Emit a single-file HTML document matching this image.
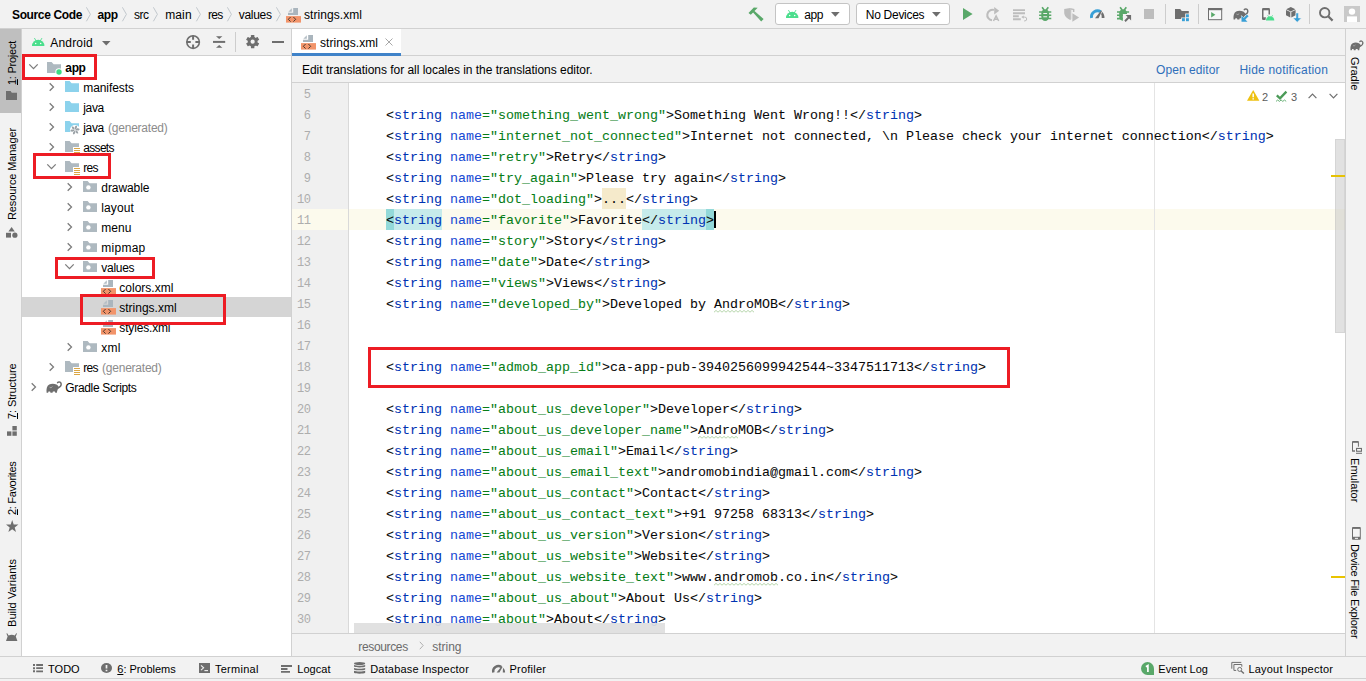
<!DOCTYPE html>
<html><head><meta charset="utf-8"><title>strings.xml</title>
<style>
html,body{margin:0;padding:0;}
body{width:1366px;height:681px;overflow:hidden;position:relative;background:#f2f2f2;font-family:"Liberation Sans",sans-serif;font-size:12px;color:#000;}
#r{position:absolute;left:0;top:0;width:1366px;height:681px;overflow:hidden;}
#r div,#r span,#r svg,#r pre{position:absolute;display:block;white-space:pre;}
#r span span,#r span u,#r span s,#r span b,#r span i{position:static;display:inline;}
.ul{text-decoration:underline;text-underline-offset:1px;text-decoration-thickness:1px}
#r svg{overflow:visible;}
.m{font-family:"Liberation Mono",monospace;}
.cl{font-family:"Liberation Mono",monospace;font-size:13.333px;line-height:21px;height:21px;left:386px;color:#080808;margin-top:1px;-webkit-text-stroke:0.05px;}
.cl b{font-weight:normal;color:#0033b3;}
.cl i{font-style:normal;color:#174ad4;}
.cl u{text-decoration:none;color:#067d17;}
.cl s{text-decoration:none;}
.ln{font-family:"Liberation Mono",monospace;font-size:12px;line-height:21px;height:21px;left:291px;width:19.5px;text-align:right;color:#adadad;letter-spacing:-0.5px;margin-top:2px}
</style></head><body><div id="r">
<div style="left:0px;top:28px;width:1366px;height:1px;background:#d1d1d1;"></div>
<div style="left:0px;top:29px;width:21px;height:84px;background:#bfbfbf;"></div>
<div style="left:21px;top:29px;width:1px;height:628px;background:#d1d1d1;"></div>
<div style="left:22px;top:29px;width:269px;height:26px;background:#f2f2f2;"></div>
<div style="left:22px;top:55px;width:269px;height:1px;background:#d1d1d1;"></div>
<div style="left:22px;top:56px;width:269px;height:601px;background:#fff;"></div>
<div style="left:22px;top:297px;width:269px;height:20px;background:#d5d5d5;"></div>
<div style="left:291px;top:29px;width:1px;height:628px;background:#d1d1d1;"></div>
<div style="left:292px;top:29px;width:1053px;height:26px;background:#f2f2f2;"></div>
<div style="left:292px;top:29px;width:109px;height:24px;background:#fff;"></div>
<div style="left:292px;top:53px;width:109px;height:3px;background:#4083c9;"></div>
<div style="left:401px;top:55px;width:944px;height:1px;background:#d1d1d1;"></div>
<div style="left:292px;top:56px;width:1053px;height:26px;background:#f2f2f2;"></div>
<div style="left:292px;top:82px;width:1053px;height:1px;background:#d1d1d1;"></div>
<div style="left:292px;top:83px;width:1053px;height:550px;background:#fff;"></div>
<div style="left:292px;top:83px;width:56px;height:550px;background:#f0f0f0;"></div>
<div style="left:348px;top:83px;width:1px;height:550px;background:#d9d9d9;"></div>
<div style="left:292px;top:209px;width:56px;height:21px;background:#fcfaed;"></div>
<div style="left:349px;top:209px;width:996px;height:21px;background:#fcfaed;"></div>
<div style="left:1154px;top:83px;width:1px;height:550px;background:#e4e4e4;"></div>
<div style="left:386px;top:209px;width:8px;height:21px;background:#93d9d9;"></div>
<div style="left:394px;top:209px;width:48px;height:21px;background:#c6ebeb;"></div>
<div style="left:642px;top:209px;width:64px;height:21px;background:#c6ebeb;"></div>
<div style="left:706px;top:209px;width:8px;height:21px;background:#93d9d9;"></div>
<div style="left:714px;top:211px;width:2px;height:17px;background:#000;"></div>
<div style="left:602px;top:188px;width:24px;height:21px;background:#f5eacb;"></div>
<div style="left:1335px;top:139px;width:10px;height:194px;background:rgba(195,195,195,0.5);box-shadow:inset 0 0 0 1px rgba(160,160,160,0.18);"></div>
<div style="left:1331px;top:175px;width:14px;height:2px;background:#e6c205;"></div>
<div style="left:1331px;top:576px;width:14px;height:2px;background:#e9c400;"></div>
<div style="left:292px;top:633px;width:1053px;height:1px;background:#d1d1d1;"></div>
<div style="left:292px;top:634px;width:1053px;height:22px;background:#f2f2f2;"></div>
<div style="left:1345px;top:29px;width:1px;height:628px;background:#d1d1d1;"></div>
<div style="left:0px;top:656px;width:1366px;height:1px;background:#d1d1d1;"></div>
<div style="left:0px;top:678px;width:1366px;height:1px;background:#d1d1d1;"></div>
<span style="left:12px;top:8.00px;font-size:12px;line-height:14.00px;font-weight:bold;letter-spacing:-0.365px;color:#000;">Source Code</span>
<span style="left:97.4px;top:8.00px;font-size:12px;line-height:14.00px;font-weight:bold;letter-spacing:-0.278px;color:#000;">app</span>
<span style="left:134px;top:8.00px;font-size:12px;line-height:14.00px;letter-spacing:-0.499px;color:#000;">src</span>
<span style="left:165.2px;top:8.00px;font-size:12px;line-height:14.00px;letter-spacing:0.122px;color:#000;">main</span>
<span style="left:208px;top:8.00px;font-size:12px;line-height:14.00px;letter-spacing:-0.723px;color:#000;">res</span>
<span style="left:238.7px;top:8.00px;font-size:12px;line-height:14.00px;letter-spacing:-0.281px;color:#000;">values</span>
<span style="left:304px;top:8.00px;font-size:12px;line-height:14.00px;letter-spacing:0.060px;color:#000;">strings.xml</span>
<svg style="left:86.1px;top:7px" width="4.8" height="14.6" viewBox="0 0 4.8 14.6"><path d="M0.4 0.3 L4.4 7.3 L0.4 14.3" fill="none" stroke="#bfc5ca" stroke-width="0.95"/></svg>
<svg style="left:121.89999999999999px;top:7px" width="4.8" height="14.6" viewBox="0 0 4.8 14.6"><path d="M0.4 0.3 L4.4 7.3 L0.4 14.3" fill="none" stroke="#bfc5ca" stroke-width="0.95"/></svg>
<svg style="left:152.6px;top:7px" width="4.8" height="14.6" viewBox="0 0 4.8 14.6"><path d="M0.4 0.3 L4.4 7.3 L0.4 14.3" fill="none" stroke="#bfc5ca" stroke-width="0.95"/></svg>
<svg style="left:195.6px;top:7px" width="4.8" height="14.6" viewBox="0 0 4.8 14.6"><path d="M0.4 0.3 L4.4 7.3 L0.4 14.3" fill="none" stroke="#bfc5ca" stroke-width="0.95"/></svg>
<svg style="left:227.1px;top:7px" width="4.8" height="14.6" viewBox="0 0 4.8 14.6"><path d="M0.4 0.3 L4.4 7.3 L0.4 14.3" fill="none" stroke="#bfc5ca" stroke-width="0.95"/></svg>
<svg style="left:275.6px;top:7px" width="4.8" height="14.6" viewBox="0 0 4.8 14.6"><path d="M0.4 0.3 L4.4 7.3 L0.4 14.3" fill="none" stroke="#bfc5ca" stroke-width="0.95"/></svg>
<div style="left:775px;top:3px;width:73px;height:20px;background:#fff;border:1px solid #c4c4c4;border-radius:3px"></div>
<div style="left:856px;top:3px;width:92px;height:20px;background:#fff;border:1px solid #c4c4c4;border-radius:3px"></div>
<span style="left:804.2px;top:8.00px;font-size:12px;line-height:14.00px;letter-spacing:-0.341px;color:#000;">app</span>
<span style="left:865.8px;top:8.00px;font-size:12px;line-height:14.00px;letter-spacing:-0.285px;color:#000;">No Devices</span>
<svg style="left:831.4px;top:12px" width="8.7" height="4.7" viewBox="0 0 8.7 4.7"><path d="M0 0 H8.7 L4.35 4.7 Z" fill="#6e6e6e"/></svg>
<svg style="left:931.6px;top:12px" width="8.7" height="4.7" viewBox="0 0 8.7 4.7"><path d="M0 0 H8.7 L4.35 4.7 Z" fill="#6e6e6e"/></svg>
<div style="left:1165px;top:4px;width:1px;height:20px;background:#cdcdcd;"></div>
<div style="left:1198px;top:4px;width:1px;height:20px;background:#cdcdcd;"></div>
<div style="left:1309px;top:4px;width:1px;height:20px;background:#cdcdcd;"></div>
<span style="left:50.3px;top:36.00px;font-size:12px;line-height:14.00px;letter-spacing:0.163px;color:#000;">Android</span>
<svg style="left:102px;top:41px" width="8.5" height="4.6" viewBox="0 0 8.5 4.6"><path d="M0 0 H8.5 L4.25 4.6 Z" fill="#6e6e6e"/></svg>
<div style="left:235px;top:32px;width:1px;height:20px;background:#cdcdcd;"></div>
<svg style="left:47px;top:62px" width="14" height="11" viewBox="0 0 14 11"><path d="M0 0 H4.6 L6.6 2.2 H14 V11 H0 Z" fill="#aeb9c0"/></svg>
<svg style="left:54.5px;top:67.5px" width="8" height="8" viewBox="0 0 8 8"><circle cx="4" cy="4" r="3.7" fill="#fff"/><circle cx="4" cy="4" r="2.7" fill="#3ddc84"/></svg>
<svg style="left:28.0px;top:63px" width="11" height="7" viewBox="0 0 11 7"><path d="M1.3 1.4 L5.5 5.6 L9.7 1.4" fill="none" stroke="#7c7c7c" stroke-width="1.3"/></svg>
<span style="left:65.3px;top:61.00px;font-size:12px;line-height:14.00px;font-weight:bold;letter-spacing:-0.345px;color:#000;">app</span>
<svg style="left:65px;top:81px" width="14" height="11" viewBox="0 0 14 11"><path d="M0 0 H4.6 L6.6 2.2 H14 V11 H0 Z" fill="#8cd2ec"/></svg>
<svg style="left:48.5px;top:82px" width="7" height="11" viewBox="0 0 7 11"><path d="M0.7 1.2 L4.5 5 L0.7 8.8" fill="none" stroke="#7c7c7c" stroke-width="1.3"/></svg>
<span style="left:83.3px;top:81.00px;font-size:12px;line-height:14.00px;letter-spacing:-0.095px;color:#000;">manifests</span>
<svg style="left:65px;top:101px" width="14" height="11" viewBox="0 0 14 11"><path d="M0 0 H4.6 L6.6 2.2 H14 V11 H0 Z" fill="#8cd2ec"/></svg>
<svg style="left:48.5px;top:102px" width="7" height="11" viewBox="0 0 7 11"><path d="M0.7 1.2 L4.5 5 L0.7 8.8" fill="none" stroke="#7c7c7c" stroke-width="1.3"/></svg>
<span style="left:83.3px;top:101.00px;font-size:12px;line-height:14.00px;letter-spacing:-0.378px;color:#000;">java</span>
<svg style="left:65px;top:121px" width="14" height="11" viewBox="0 0 14 11"><path d="M0 0 H4.6 L6.6 2.2 H14 V11 H0 Z" fill="#8cd2ec"/></svg>
<svg style="left:69.9px;top:124.7px" width="10" height="10" viewBox="0 0 10 10"><circle cx="5" cy="5" r="5" fill="#fff"/><g fill="#9aa1a6" transform="translate(5,5)"><path d="M0 -0.4 C1.6 -1.6 3 -3.2 1.4 -4.5 C0 -4 -0.9 -2.2 0 -0.4Z" transform="rotate(0)"/><path d="M0 -0.4 C1.6 -1.6 3 -3.2 1.4 -4.5 C0 -4 -0.9 -2.2 0 -0.4Z" transform="rotate(60)"/><path d="M0 -0.4 C1.6 -1.6 3 -3.2 1.4 -4.5 C0 -4 -0.9 -2.2 0 -0.4Z" transform="rotate(120)"/><path d="M0 -0.4 C1.6 -1.6 3 -3.2 1.4 -4.5 C0 -4 -0.9 -2.2 0 -0.4Z" transform="rotate(180)"/><path d="M0 -0.4 C1.6 -1.6 3 -3.2 1.4 -4.5 C0 -4 -0.9 -2.2 0 -0.4Z" transform="rotate(240)"/><path d="M0 -0.4 C1.6 -1.6 3 -3.2 1.4 -4.5 C0 -4 -0.9 -2.2 0 -0.4Z" transform="rotate(300)"/></g></svg>
<svg style="left:48.5px;top:122px" width="7" height="11" viewBox="0 0 7 11"><path d="M0.7 1.2 L4.5 5 L0.7 8.8" fill="none" stroke="#7c7c7c" stroke-width="1.3"/></svg>
<span style="left:83.3px;top:121.00px;font-size:12px;line-height:14.00px;letter-spacing:-0.378px;color:#000;">java</span>
<span style="left:108.0px;top:121.00px;font-size:12px;line-height:14.00px;letter-spacing:-0.222px;color:#8c8c8c;">(generated)</span>
<svg style="left:65px;top:141px" width="14" height="11" viewBox="0 0 14 11"><path d="M0 0 H4.6 L6.6 2.2 H14 V11 H0 Z" fill="#aeb9c0"/></svg>
<svg style="left:73px;top:147px" width="8" height="9" viewBox="0 0 8 9"><rect x="0" y="0" width="8" height="9" fill="#fff"/><path d="M1 1.5 H7 M1 3.5 H7 M1 5.5 H7 M1 7.5 H7" stroke="#dca744" stroke-width="1"/></svg>
<svg style="left:48.5px;top:142px" width="7" height="11" viewBox="0 0 7 11"><path d="M0.7 1.2 L4.5 5 L0.7 8.8" fill="none" stroke="#7c7c7c" stroke-width="1.3"/></svg>
<span style="left:83.3px;top:141.00px;font-size:12px;line-height:14.00px;letter-spacing:-0.697px;color:#000;">assets</span>
<svg style="left:65px;top:161px" width="14" height="11" viewBox="0 0 14 11"><path d="M0 0 H4.6 L6.6 2.2 H14 V11 H0 Z" fill="#aeb9c0"/></svg>
<svg style="left:73px;top:167px" width="8" height="9" viewBox="0 0 8 9"><rect x="0" y="0" width="8" height="9" fill="#fff"/><path d="M1 1.5 H7 M1 3.5 H7 M1 5.5 H7 M1 7.5 H7" stroke="#dca744" stroke-width="1"/></svg>
<svg style="left:46.0px;top:163px" width="11" height="7" viewBox="0 0 11 7"><path d="M1.3 1.4 L5.5 5.6 L9.7 1.4" fill="none" stroke="#7c7c7c" stroke-width="1.3"/></svg>
<span style="left:83.3px;top:161.00px;font-size:12px;line-height:14.00px;letter-spacing:-0.723px;color:#000;">res</span>
<svg style="left:83px;top:181px" width="14" height="11" viewBox="0 0 14 11"><path d="M0 0 H4.6 L6.6 2.2 H14 V11 H0 Z" fill="#aeb9c0"/></svg>
<svg style="left:86px;top:185.2px" width="5" height="5" viewBox="0 0 5 5"><circle cx="2.4" cy="2.4" r="2.2" fill="#fff"/></svg>
<svg style="left:66.5px;top:182px" width="7" height="11" viewBox="0 0 7 11"><path d="M0.7 1.2 L4.5 5 L0.7 8.8" fill="none" stroke="#7c7c7c" stroke-width="1.3"/></svg>
<span style="left:101.3px;top:181.00px;font-size:12px;line-height:14.00px;letter-spacing:-0.087px;color:#000;">drawable</span>
<svg style="left:83px;top:201px" width="14" height="11" viewBox="0 0 14 11"><path d="M0 0 H4.6 L6.6 2.2 H14 V11 H0 Z" fill="#aeb9c0"/></svg>
<svg style="left:86px;top:205.2px" width="5" height="5" viewBox="0 0 5 5"><circle cx="2.4" cy="2.4" r="2.2" fill="#fff"/></svg>
<svg style="left:66.5px;top:202px" width="7" height="11" viewBox="0 0 7 11"><path d="M0.7 1.2 L4.5 5 L0.7 8.8" fill="none" stroke="#7c7c7c" stroke-width="1.3"/></svg>
<span style="left:101.3px;top:201.00px;font-size:12px;line-height:14.00px;letter-spacing:0.113px;color:#000;">layout</span>
<svg style="left:83px;top:221px" width="14" height="11" viewBox="0 0 14 11"><path d="M0 0 H4.6 L6.6 2.2 H14 V11 H0 Z" fill="#aeb9c0"/></svg>
<svg style="left:86px;top:225.2px" width="5" height="5" viewBox="0 0 5 5"><circle cx="2.4" cy="2.4" r="2.2" fill="#fff"/></svg>
<svg style="left:66.5px;top:222px" width="7" height="11" viewBox="0 0 7 11"><path d="M0.7 1.2 L4.5 5 L0.7 8.8" fill="none" stroke="#7c7c7c" stroke-width="1.3"/></svg>
<span style="left:101.3px;top:221.00px;font-size:12px;line-height:14.00px;letter-spacing:-0.004px;color:#000;">menu</span>
<svg style="left:83px;top:241px" width="14" height="11" viewBox="0 0 14 11"><path d="M0 0 H4.6 L6.6 2.2 H14 V11 H0 Z" fill="#aeb9c0"/></svg>
<svg style="left:86px;top:245.2px" width="5" height="5" viewBox="0 0 5 5"><circle cx="2.4" cy="2.4" r="2.2" fill="#fff"/></svg>
<svg style="left:66.5px;top:242px" width="7" height="11" viewBox="0 0 7 11"><path d="M0.7 1.2 L4.5 5 L0.7 8.8" fill="none" stroke="#7c7c7c" stroke-width="1.3"/></svg>
<span style="left:101.3px;top:241.00px;font-size:12px;line-height:14.00px;letter-spacing:0.253px;color:#000;">mipmap</span>
<svg style="left:83px;top:261px" width="14" height="11" viewBox="0 0 14 11"><path d="M0 0 H4.6 L6.6 2.2 H14 V11 H0 Z" fill="#aeb9c0"/></svg>
<svg style="left:86px;top:265.2px" width="5" height="5" viewBox="0 0 5 5"><circle cx="2.4" cy="2.4" r="2.2" fill="#fff"/></svg>
<svg style="left:64.0px;top:263px" width="11" height="7" viewBox="0 0 11 7"><path d="M1.3 1.4 L5.5 5.6 L9.7 1.4" fill="none" stroke="#7c7c7c" stroke-width="1.3"/></svg>
<span style="left:101.3px;top:261.00px;font-size:12px;line-height:14.00px;letter-spacing:-0.281px;color:#000;">values</span>
<svg style="left:101px;top:279px" width="16" height="16" viewBox="0 0 16 16"><path d="M7.2 1 H12 V7.9 H2 V5.7 H7.2 Z" fill="#aab5bd"/><path d="M5.8 1.2 V4.7 H2.3 Z" fill="#b4bec5"/><rect x="0" y="9.1" width="15" height="6.5" fill="#f2946a"/><path d="M4.6 10 L2.3 12.3 L4.6 14.6 M7.4 10 L9.7 12.3 L7.4 14.6" fill="none" stroke="#4a3a30" stroke-width="1"/></svg>
<span style="left:119.3px;top:281.00px;font-size:12px;line-height:14.00px;letter-spacing:-0.001px;color:#000;">colors.xml</span>
<svg style="left:101px;top:299px" width="16" height="16" viewBox="0 0 16 16"><path d="M7.2 1 H12 V7.9 H2 V5.7 H7.2 Z" fill="#aab5bd"/><path d="M5.8 1.2 V4.7 H2.3 Z" fill="#b4bec5"/><rect x="0" y="9.1" width="15" height="6.5" fill="#f2946a"/><path d="M4.6 10 L2.3 12.3 L4.6 14.6 M7.4 10 L9.7 12.3 L7.4 14.6" fill="none" stroke="#4a3a30" stroke-width="1"/></svg>
<span style="left:119.3px;top:301.00px;font-size:12px;line-height:14.00px;letter-spacing:-0.004px;color:#000;">strings.xml</span>
<svg style="left:101px;top:319px" width="16" height="16" viewBox="0 0 16 16"><path d="M7.2 1 H12 V7.9 H2 V5.7 H7.2 Z" fill="#aab5bd"/><path d="M5.8 1.2 V4.7 H2.3 Z" fill="#b4bec5"/><rect x="0" y="9.1" width="15" height="6.5" fill="#f2946a"/><path d="M4.6 10 L2.3 12.3 L4.6 14.6 M7.4 10 L9.7 12.3 L7.4 14.6" fill="none" stroke="#4a3a30" stroke-width="1"/></svg>
<span style="left:119.3px;top:321.00px;font-size:12px;line-height:14.00px;letter-spacing:-0.167px;color:#000;">styles.xml</span>
<svg style="left:83px;top:341px" width="14" height="11" viewBox="0 0 14 11"><path d="M0 0 H4.6 L6.6 2.2 H14 V11 H0 Z" fill="#aeb9c0"/></svg>
<svg style="left:86px;top:345.2px" width="5" height="5" viewBox="0 0 5 5"><circle cx="2.4" cy="2.4" r="2.2" fill="#fff"/></svg>
<svg style="left:66.5px;top:342px" width="7" height="11" viewBox="0 0 7 11"><path d="M0.7 1.2 L4.5 5 L0.7 8.8" fill="none" stroke="#7c7c7c" stroke-width="1.3"/></svg>
<span style="left:101.3px;top:341.00px;font-size:12px;line-height:14.00px;letter-spacing:0.279px;color:#000;">xml</span>
<svg style="left:65px;top:361px" width="14" height="11" viewBox="0 0 14 11"><path d="M0 0 H4.6 L6.6 2.2 H14 V11 H0 Z" fill="#aeb9c0"/></svg>
<svg style="left:73px;top:367px" width="8" height="9" viewBox="0 0 8 9"><rect x="0" y="0" width="8" height="9" fill="#fff"/><path d="M1 1.5 H7 M1 3.5 H7 M1 5.5 H7 M1 7.5 H7" stroke="#dca744" stroke-width="1"/></svg>
<svg style="left:48.5px;top:362px" width="7" height="11" viewBox="0 0 7 11"><path d="M0.7 1.2 L4.5 5 L0.7 8.8" fill="none" stroke="#7c7c7c" stroke-width="1.3"/></svg>
<span style="left:83.3px;top:361.00px;font-size:12px;line-height:14.00px;letter-spacing:-0.723px;color:#000;">res</span>
<span style="left:102.0px;top:361.00px;font-size:12px;line-height:14.00px;letter-spacing:-0.222px;color:#8c8c8c;">(generated)</span>
<svg style="left:46.2px;top:380.6px" width="16" height="12" viewBox="0 0 16 12"><path fill="#6e6e6e" d="M0.6 11.8 C0.2 8 0.8 4.8 3.2 3.5 C5.4 2.4 8.2 2.5 10.4 3.5 C11.7 4.1 12.5 5.2 12.8 6.4 L11.7 8.4 C11.2 9.6 10.9 10.6 10.9 11.8 L9.3 11.8 L8.9 10.5 L6.9 10.5 L6.5 11.8 L4.5 11.8 L4.1 10.5 L2.5 10.5 L2.1 11.8 Z"/><path fill="none" stroke="#6e6e6e" stroke-width="1.5" stroke-linecap="round" d="M11.6 7.2 C14 6.2 15.5 4.4 15.1 2.7 C14.8 1.3 13.4 0.6 12.3 1.1 L11.6 1.6"/><path fill="none" stroke="#d8d8d8" stroke-width="0.6" d="M3.6 6.2 C4.6 7 5.6 6.6 6.4 5.6"/></svg>
<svg style="left:30.5px;top:382px" width="7" height="11" viewBox="0 0 7 11"><path d="M0.7 1.2 L4.5 5 L0.7 8.8" fill="none" stroke="#7c7c7c" stroke-width="1.3"/></svg>
<span style="left:65.3px;top:381.00px;font-size:12px;line-height:14.00px;letter-spacing:-0.345px;color:#000;">Gradle Scripts</span>
<div style="left:22px;top:54px;width:69px;height:20px;border:3px solid #ed1c24;"></div>
<div style="left:33px;top:153px;width:72px;height:20px;border:3px solid #ed1c24;"></div>
<div style="left:55px;top:257px;width:94px;height:16px;border:3px solid #ed1c24;"></div>
<div style="left:80px;top:294px;width:140px;height:25px;border:3px solid #ed1c24;"></div>
<div style="left:368px;top:347px;width:636px;height:35px;border:3px solid #ed1c24;"></div>
<span style="left:4.6px;top:85px;font-size:11px;line-height:14px;letter-spacing:-0.247px;color:#000;transform-origin:0 0;transform:rotate(-90deg);"><span class="ul">1</span>: Project</span>
<span style="left:4.6px;top:220px;font-size:11px;line-height:14px;letter-spacing:-0.097px;color:#000;transform-origin:0 0;transform:rotate(-90deg);">Resource Manager</span>
<span style="left:4.6px;top:419px;font-size:11px;line-height:14px;letter-spacing:-0.113px;color:#000;transform-origin:0 0;transform:rotate(-90deg);"><span class="ul">7</span>: Structure</span>
<span style="left:4.6px;top:515px;font-size:11px;line-height:14px;letter-spacing:-0.330px;color:#000;transform-origin:0 0;transform:rotate(-90deg);"><span class="ul">2</span>: Favorites</span>
<span style="left:4.6px;top:626.5px;font-size:11px;line-height:14px;letter-spacing:0.068px;color:#000;transform-origin:0 0;transform:rotate(-90deg);">Build Variants</span>
<span style="left:1362.1px;top:57px;font-size:11px;line-height:14px;letter-spacing:0.081px;color:#000;transform-origin:0 0;transform:rotate(90deg);">Gradle</span>
<span style="left:1362.1px;top:458px;font-size:11px;line-height:14px;letter-spacing:0.060px;color:#000;transform-origin:0 0;transform:rotate(90deg);">Emulator</span>
<span style="left:1362.1px;top:543.5px;font-size:11px;line-height:14px;letter-spacing:-0.196px;color:#000;transform-origin:0 0;transform:rotate(90deg);">Device File Explorer</span>
<span style="left:320px;top:36.00px;font-size:12px;line-height:14.00px;letter-spacing:0.060px;color:#000;">strings.xml</span>
<svg style="left:385px;top:38.3px" width="8" height="8" viewBox="0 0 8 8"><path d="M0.5 0.5 L7.5 7.5 M7.5 0.5 L0.5 7.5" stroke="#a8a8a8" stroke-width="1" fill="none"/></svg>
<span style="left:302px;top:63.00px;font-size:12px;line-height:14.00px;letter-spacing:-0.027px;color:#000;">Edit translations for all locales in the translations editor.</span>
<span style="left:1156px;top:63.00px;font-size:12px;line-height:14.00px;letter-spacing:0.072px;color:#2f6fba;">Open editor</span>
<span style="left:1239.5px;top:63.00px;font-size:12px;line-height:14.00px;letter-spacing:0.183px;color:#2f6fba;">Hide notification</span>
<span style="left:1262px;top:90.72px;font-size:11px;line-height:12.83px;letter-spacing:-0.518px;color:#5c5c5c;">2</span>
<span style="left:1291px;top:90.72px;font-size:11px;line-height:12.83px;letter-spacing:-0.518px;color:#5c5c5c;">3</span>
<span class="ln" style="top:83px">5</span>
<span class="ln" style="top:104px">6</span>
<span class="cl" style="top:104px">&lt;<b>string</b> <i>name</i><u>="something_went_wrong"</u>&gt;Something Went Wrong!!&lt;/<b>string</b>&gt;</span>
<span class="ln" style="top:125px">7</span>
<span class="cl" style="top:125px">&lt;<b>string</b> <i>name</i><u>="internet_not_connected"</u>&gt;Internet not connected, \n Please check your internet connection&lt;/<b>string</b>&gt;</span>
<span class="ln" style="top:146px">8</span>
<span class="cl" style="top:146px">&lt;<b>string</b> <i>name</i><u>="retry"</u>&gt;Retry&lt;/<b>string</b>&gt;</span>
<span class="ln" style="top:167px">9</span>
<span class="cl" style="top:167px">&lt;<b>string</b> <i>name</i><u>="try_again"</u>&gt;Please try again&lt;/<b>string</b>&gt;</span>
<span class="ln" style="top:188px">10</span>
<span class="cl" style="top:188px">&lt;<b>string</b> <i>name</i><u>="dot_loading"</u>&gt;...&lt;/<b>string</b>&gt;</span>
<span class="ln" style="top:209px">11</span>
<span class="cl" style="top:209px">&lt;<b>string</b> <i>name</i><u>="favorite"</u>&gt;Favorite&lt;/<b>string</b>&gt;</span>
<span class="ln" style="top:230px">12</span>
<span class="cl" style="top:230px">&lt;<b>string</b> <i>name</i><u>="story"</u>&gt;Story&lt;/<b>string</b>&gt;</span>
<span class="ln" style="top:251px">13</span>
<span class="cl" style="top:251px">&lt;<b>string</b> <i>name</i><u>="date"</u>&gt;Date&lt;/<b>string</b>&gt;</span>
<span class="ln" style="top:272px">14</span>
<span class="cl" style="top:272px">&lt;<b>string</b> <i>name</i><u>="views"</u>&gt;Views&lt;/<b>string</b>&gt;</span>
<span class="ln" style="top:293px">15</span>
<span class="cl" style="top:293px">&lt;<b>string</b> <i>name</i><u>="developed_by"</u>&gt;Developed by <s style="">Andro</s>MOB&lt;/<b>string</b>&gt;</span>
<span class="ln" style="top:314px">16</span>
<span class="ln" style="top:335px">17</span>
<span class="ln" style="top:356px">18</span>
<span class="cl" style="top:356px">&lt;<b>string</b> <i>name</i><u>="admob_app_id"</u>&gt;ca-app-pub-3940256099942544~3347511713&lt;/<b>string</b>&gt;</span>
<span class="ln" style="top:377px">19</span>
<span class="ln" style="top:398px">20</span>
<span class="cl" style="top:398px">&lt;<b>string</b> <i>name</i><u>="about_us_developer"</u>&gt;Developer&lt;/<b>string</b>&gt;</span>
<span class="ln" style="top:419px">21</span>
<span class="cl" style="top:419px">&lt;<b>string</b> <i>name</i><u>="about_us_developer_name"</u>&gt;<s style="">Andro</s>MOB&lt;/<b>string</b>&gt;</span>
<span class="ln" style="top:440px">22</span>
<span class="cl" style="top:440px">&lt;<b>string</b> <i>name</i><u>="about_us_email"</u>&gt;Email&lt;/<b>string</b>&gt;</span>
<span class="ln" style="top:461px">23</span>
<span class="cl" style="top:461px">&lt;<b>string</b> <i>name</i><u>="about_us_email_text"</u>&gt;andromobindia@gmail.com&lt;/<b>string</b>&gt;</span>
<span class="ln" style="top:482px">24</span>
<span class="cl" style="top:482px">&lt;<b>string</b> <i>name</i><u>="about_us_contact"</u>&gt;Contact&lt;/<b>string</b>&gt;</span>
<span class="ln" style="top:503px">25</span>
<span class="cl" style="top:503px">&lt;<b>string</b> <i>name</i><u>="about_us_contact_text"</u>&gt;+91 97258 68313&lt;/<b>string</b>&gt;</span>
<span class="ln" style="top:524px">26</span>
<span class="cl" style="top:524px">&lt;<b>string</b> <i>name</i><u>="about_us_version"</u>&gt;Version&lt;/<b>string</b>&gt;</span>
<span class="ln" style="top:545px">27</span>
<span class="cl" style="top:545px">&lt;<b>string</b> <i>name</i><u>="about_us_website"</u>&gt;Website&lt;/<b>string</b>&gt;</span>
<span class="ln" style="top:566px">28</span>
<span class="cl" style="top:566px">&lt;<b>string</b> <i>name</i><u>="about_us_website_text"</u>&gt;www.<s style="">andromob</s>.co.in&lt;/<b>string</b>&gt;</span>
<span class="ln" style="top:587px">29</span>
<span class="cl" style="top:587px">&lt;<b>string</b> <i>name</i><u>="about_us_about"</u>&gt;About Us&lt;/<b>string</b>&gt;</span>
<span class="ln" style="top:608px">30</span>
<span class="cl" style="top:608px">&lt;<b>string</b> <i>name</i><u>="about"</u>&gt;About&lt;/<b>string</b>&gt;</span>
<svg style="left:714px;top:309.6px" width="40" height="3" viewBox="0 0 40 3"><path d="M0.0 2.2 L2.0 0.4 L4.0 2.2 L6.0 0.4 L8.0 2.2 L10.0 0.4 L12.0 2.2 L14.0 0.4 L16.0 2.2 L18.0 0.4 L20.0 2.2 L22.0 0.4 L24.0 2.2 L26.0 0.4 L28.0 2.2 L30.0 0.4 L32.0 2.2 L34.0 0.4 L36.0 2.2 L38.0 0.4 L40.0 2.2" fill="none" stroke="#a5cc98" stroke-width="0.8"/></svg>
<svg style="left:698px;top:435.6px" width="40" height="3" viewBox="0 0 40 3"><path d="M0.0 2.2 L2.0 0.4 L4.0 2.2 L6.0 0.4 L8.0 2.2 L10.0 0.4 L12.0 2.2 L14.0 0.4 L16.0 2.2 L18.0 0.4 L20.0 2.2 L22.0 0.4 L24.0 2.2 L26.0 0.4 L28.0 2.2 L30.0 0.4 L32.0 2.2 L34.0 0.4 L36.0 2.2 L38.0 0.4 L40.0 2.2" fill="none" stroke="#a5cc98" stroke-width="0.8"/></svg>
<svg style="left:714px;top:582.6px" width="64" height="3" viewBox="0 0 64 3"><path d="M0.0 2.2 L2.0 0.4 L4.0 2.2 L6.0 0.4 L8.0 2.2 L10.0 0.4 L12.0 2.2 L14.0 0.4 L16.0 2.2 L18.0 0.4 L20.0 2.2 L22.0 0.4 L24.0 2.2 L26.0 0.4 L28.0 2.2 L30.0 0.4 L32.0 2.2 L34.0 0.4 L36.0 2.2 L38.0 0.4 L40.0 2.2 L42.0 0.4 L44.0 2.2 L46.0 0.4 L48.0 2.2 L50.0 0.4 L52.0 2.2 L54.0 0.4 L56.0 2.2 L58.0 0.4 L60.0 2.2 L62.0 0.4 L64.0 2.2" fill="none" stroke="#a5cc98" stroke-width="0.8"/></svg>
<div style="left:354px;top:623px;width:311px;height:10px;background:rgba(222,222,222,0.92);"></div>
<div style="left:292px;top:633px;width:1053px;height:1px;background:#d1d1d1;"></div>
<div style="left:292px;top:634px;width:1053px;height:22px;background:#f2f2f2;"></div>
<span style="left:358.3px;top:639.50px;font-size:12px;line-height:14.00px;letter-spacing:-0.354px;color:#6b6b6b;">resources</span>
<span style="left:432.3px;top:639.50px;font-size:12px;line-height:14.00px;letter-spacing:-0.024px;color:#6b6b6b;">string</span>
<svg style="left:419px;top:641px" width="5" height="9" viewBox="0 0 5 9"><path d="M0.8 0.8 L4.2 4.5 L0.8 8.2" fill="none" stroke="#b0b0b0" stroke-width="1"/></svg>
<span style="left:48px;top:663.12px;font-size:11px;line-height:12.83px;letter-spacing:0.031px;color:#000;">TODO</span>
<span style="left:117.3px;top:663.12px;font-size:11px;line-height:12.83px;letter-spacing:-0.035px;color:#000;"><span class="ul">6</span>: Problems</span>
<span style="left:214.9px;top:663.12px;font-size:11px;line-height:12.83px;letter-spacing:0.279px;color:#000;">Terminal</span>
<span style="left:297.3px;top:663.12px;font-size:11px;line-height:12.83px;letter-spacing:0.046px;color:#000;">Logcat</span>
<span style="left:370.2px;top:663.12px;font-size:11px;line-height:12.83px;letter-spacing:0.189px;color:#000;">Database Inspector</span>
<span style="left:509.5px;top:663.12px;font-size:11px;line-height:12.83px;letter-spacing:0.232px;color:#000;">Profiler</span>
<span style="left:1158.3px;top:663.12px;font-size:11px;line-height:12.83px;letter-spacing:0.007px;color:#000;">Event Log</span>
<span style="left:1248.4px;top:663.12px;font-size:11px;line-height:12.83px;letter-spacing:0.211px;color:#000;">Layout Inspector</span>
<svg style="left:33px;top:664px" width="10" height="9" viewBox="0 0 10 9"><path d="M0 1 H2 M0 4.2 H2 M0 7.3 H2" stroke="#6e6e6e" stroke-width="1.9"/><path d="M3.2 1 H10 M3.2 4.2 H10 M3.2 7.3 H10" stroke="#6e6e6e" stroke-width="1.8"/></svg>
<svg style="left:101.1px;top:662.7px" width="11" height="10" viewBox="0 0 11 10"><ellipse cx="5.5" cy="5" rx="5.5" ry="5" fill="#6e6e6e"/><path d="M5.5 2 V5.6 M5.5 6.8 V8.2" stroke="#f2f2f2" stroke-width="1.7"/></svg>
<svg style="left:199px;top:663.1px" width="11" height="10" viewBox="0 0 11 10"><rect width="11" height="10" fill="#6e6e6e"/><path d="M2 2.4 L4.6 4.8 L2 7.2" fill="none" stroke="#f2f2f2" stroke-width="1.1"/><path d="M5.4 7.6 H9" stroke="#f2f2f2" stroke-width="1.1"/></svg>
<svg style="left:281px;top:665.2px" width="11" height="8" viewBox="0 0 11 8"><path d="M0 1 H11 M0 4 H6.5 M0 6.9 H9" stroke="#6e6e6e" stroke-width="1.9"/></svg>
<svg style="left:353.8px;top:662.1px" width="11.2" height="12" viewBox="0 0 11.2 12"><g fill="#6e6e6e"><ellipse cx="5.6" cy="1.5" rx="5.6" ry="1.5"/><path d="M0 2.9 C1.5 3.9 9.7 3.9 11.2 2.9 V4.5 C9.7 5.7 1.5 5.7 0 4.5 Z"/><path d="M0 5.9 C1.5 6.9 9.7 6.9 11.2 5.9 V7.4 C9.7 8.6 1.5 8.6 0 7.4 Z"/><path d="M0 8.7 C1.5 9.7 9.7 9.7 11.2 8.7 V10.8 C9.7 12.0 1.5 12.0 0 10.8 Z"/></g></svg>
<svg style="left:491.9px;top:665.2px" width="13.2" height="7.6" viewBox="0 0 13.2 7.6"><path d="M1.3 7.5 A5.3 5.3 0 0 1 9.4 1.9" fill="none" stroke="#6e6e6e" stroke-width="2.4"/><path d="M4.6 7.6 L9.7 1.2 L10.6 1.9 L7.4 7.6 Z" fill="#6e6e6e"/><path d="M11 2.8 C12.4 4 13.1 5.6 13.1 7.4 H10.8 Z" fill="#6e6e6e"/></svg>
<svg style="left:1141px;top:662.1px" width="13" height="13" viewBox="0 0 13 13"><path d="M6.5 0 A6.5 6.5 0 1 0 6.5 13 H13 V6.5 A6.5 6.5 0 0 0 6.5 0 Z" fill="#59a869"/><path d="M4.9 4.7 L6.9 3.5 V10" fill="none" stroke="#fff" stroke-width="1.7"/></svg>
<svg style="left:1230.7px;top:662.1px" width="13" height="11.6" viewBox="0 0 13 11.6"><path d="M0.8 6.7 V0.4 H10.3" fill="none" stroke="#6e6e6e" stroke-width="1"/><path d="M5.2 8.4 H2.9 V2.5 H10.8 V4.7" fill="none" stroke="#6e6e6e" stroke-width="1"/><circle cx="8.7" cy="7.4" r="2" fill="none" stroke="#6e6e6e" stroke-width="1"/><path d="M10.2 8.9 L12.9 11.4" stroke="#6e6e6e" stroke-width="1.4"/></svg>
<svg style="left:747.5px;top:6.5px" width="16" height="15" viewBox="0 0 16 15"><path d="M0.5 6.1 L5.8 0.6 L9.7 0.8 L6.5 4 L15.6 11.9 L13.2 14.5 L5.1 5.6 L2.8 7.7 Z" fill="#59a869"/></svg>
<svg style="left:785.8px;top:10.1px" width="12.4" height="8" viewBox="0 0 12.4 8"><path d="M0 8 A6.2 6.2 0 0 1 12.4 8 Z" fill="#4bde8d" transform="translate(0,0)"/><path d="M2.6 0.4 L4.2 3 M9.8 0.4 L8.2 3" stroke="#4bde8d" stroke-width="0.9" stroke-linecap="round" fill="none"/><circle cx="3.7" cy="5.6" r="0.75" fill="#fff"/><circle cx="8.7" cy="5.6" r="0.75" fill="#fff"/></svg>
<svg style="left:963px;top:8px" width="10" height="12" viewBox="0 0 10 12"><path d="M0 0 L9.6 6 L0 12 Z" fill="#59a869"/></svg>
<svg style="left:986px;top:7px" width="14" height="14" viewBox="0 0 14 14"><path d="M7.9 2.9 A5.3 5.3 0 1 0 6 13.3" fill="none" stroke="#bdbdbd" stroke-width="2.1"/><path d="M8.2 0 L13.2 3.7 L8.2 7.5 Z" fill="#bdbdbd"/><path d="M7.5 14 L10.1 9 L12.7 14 M8.5 12.3 H11.7" fill="none" stroke="#bdbdbd" stroke-width="1.5"/></svg>
<svg style="left:1013px;top:8.8px" width="14" height="12" viewBox="0 0 14 12"><path d="M0 1.1 H12 M0 4.2 H12" stroke="#bdbdbd" stroke-width="1.9"/><path d="M0 7.2 H5.8 M0 10.2 H7.8" stroke="#bdbdbd" stroke-width="1.9"/><path d="M10 8.1 H11.8 A1.9 1.9 0 0 1 11.8 11.9 H11" fill="none" stroke="#bdbdbd" stroke-width="1"/><path d="M10.7 6.5 L8.3 8.1 L10.7 9.7Z" fill="#bdbdbd"/></svg>
<svg style="left:1038.9px;top:7px" width="12.4" height="14.4" viewBox="0 0 12.4 14.4"><path d="M3.1 0.3 L5.1 2.9 M9.3 0.3 L7.3 2.9" stroke="#59a869" stroke-width="1.7" fill="none"/><rect x="2.3" y="2.3" width="7.8" height="11.7" rx="3.9" ry="4.4" fill="#59a869"/><path d="M0.1 5 H12.3 M0.1 8.2 H12.3 M0.1 11.5 H12.3" stroke="#59a869" stroke-width="1.5"/><path d="M4.3 6.6 H8.1 M4.3 9.8 H8.1" stroke="#f2f2f2" stroke-width="1.05"/></svg>
<svg style="left:1063.8px;top:7.9px" width="15.2" height="13.9" viewBox="0 0 15.2 13.9"><path d="M0.2 0.9 L6.2 0 V12 C2.6 10.6 0.2 7.8 0.2 4.6 Z" fill="#bdbdbd"/><path d="M6.2 0 L10.4 0.9 V3.9 H8.9 V2.1 L7.3 1.8 V11.2 L6.2 12 Z" fill="#bdbdbd"/><path d="M8.4 5.2 L15.1 9.5 L8.4 13.85 Z" fill="#bdbdbd"/></svg>
<svg style="left:1089.7px;top:8.8px" width="14.6" height="9.4" viewBox="0 0 14.6 9.4"><path d="M1.5 9.1 A6.2 6.2 0 0 1 10.75 2.66" fill="none" stroke="#389fd6" stroke-width="2.8"/><path d="M5 9.2 L11.1 1.4 L12 2.1 L8.6 9.2 Z" fill="#6e6e6e"/><path d="M12.3 2.9 C13.8 4.4 14.6 6.6 14.5 9.1 H11.7 C11.8 7.4 11.6 6 11.1 5 Z" fill="#6e6e6e"/></svg>
<svg style="left:1117px;top:7px" width="14.5" height="15" viewBox="0 0 14.5 15"><path d="M3.1 0.3 L5.1 2.9 M9.3 0.3 L7.3 2.9" stroke="#59a869" stroke-width="1.7" fill="none"/><path d="M2.2 6.1 C2.2 1 10 1 10 6.1 V7 H5.8 V13.9 C3.6 13.5 2.2 12 2.2 9.8 Z" fill="#59a869"/><path d="M0 5 H12.1 M0 8.3 H5.8 M0 11.6 H5.8" stroke="#59a869" stroke-width="1.6"/><path d="M8.6 8 H14.1 V13.5 L12.1 11.5 L8.7 14.9 L7.3 13.5 L10.7 10.1 Z" fill="#6e6e6e" stroke="#f2f2f2" stroke-width="0.5" paint-order="stroke"/></svg>
<div style="left:1144px;top:9px;width:10px;height:10px;background:#bdbdbd;"></div>
<svg style="left:1175.1px;top:8.8px" width="14.2" height="12.4" viewBox="0 0 14.2 12.4"><path d="M0 0 H5.2 L6.8 2 H13.8 V4.6 H10.2 V8.6 H6.2 V10.1 H0 Z" fill="#6e6e6e"/><rect x="11" y="5.3" width="2.9" height="3" fill="#389fd6"/><rect x="7" y="9.2" width="2.9" height="3" fill="#389fd6"/><rect x="11" y="9.2" width="2.9" height="3" fill="#389fd6"/></svg>
<svg style="left:1208px;top:7.9px" width="14.2" height="12.2" viewBox="0 0 14.2 12.2"><rect x="0.5" y="0.5" width="13.2" height="11.2" fill="#f7f7f7" stroke="#6e6e6e" stroke-width="1"/><rect x="0" y="0" width="14.2" height="2.2" fill="#6e6e6e"/><path d="M3.2 4 L7.4 6.7 L3.2 9.4Z" fill="#59a869"/></svg>
<svg style="left:1233.4px;top:7.6px" width="15.6" height="11.8" viewBox="0 0 16 12"><path fill="#6e6e6e" d="M0.6 11.8 C0.2 8 0.8 4.8 3.2 3.5 C5.4 2.4 8.2 2.5 10.4 3.5 C11.7 4.1 12.5 5.2 12.8 6.4 L11.7 8.4 C11.2 9.6 10.9 10.6 10.9 11.8 L9.3 11.8 L8.9 10.5 L6.9 10.5 L6.5 11.8 L4.5 11.8 L4.1 10.5 L2.5 10.5 L2.1 11.8 Z"/><path fill="none" stroke="#6e6e6e" stroke-width="1.5" stroke-linecap="round" d="M11.6 7.2 C14 6.2 15.5 4.4 15.1 2.7 C14.8 1.3 13.4 0.6 12.3 1.1 L11.6 1.6"/><path fill="none" stroke="#d8d8d8" stroke-width="0.6" d="M3.6 6.2 C4.6 7 5.6 6.6 6.4 5.6"/></svg>
<svg style="left:1241.4px;top:14.4px" width="8.4" height="8.4" viewBox="0 0 8.4 8.4"><path d="M0.5 1.7 L0.5 7.7 L6.5 7.7 L4.3 5.5 L7.6 2.2 L6 0.6 L2.7 3.9 Z" fill="#389fd6" stroke="#f2f2f2" stroke-width="0.9" paint-order="stroke"/></svg>
<svg style="left:1262px;top:8px" width="12.6" height="13" viewBox="0 0 12.6 13"><rect x="0" y="0" width="8" height="12.1" rx="1.3" fill="#6e6e6e"/><rect x="1.5" y="2.3" width="5" height="7" fill="#f6f6f6"/><path d="M3.2 13 L4.6 6.4 H12.6 V13 Z" fill="#f2f2f2"/></svg>
<svg style="left:1266px;top:15.3px" width="8.3" height="5.6" viewBox="0 0 12.4 8"><path d="M0 8 A6.2 6.2 0 0 1 12.4 8 Z" fill="#4bde8d" transform="translate(0,0)"/><path d="M2.6 0.4 L4.2 3 M9.8 0.4 L8.2 3" stroke="#4bde8d" stroke-width="0.9" stroke-linecap="round" fill="none"/><circle cx="3.7" cy="5.6" r="0.75" fill="#3ddc84"/><circle cx="8.7" cy="5.6" r="0.75" fill="#3ddc84"/></svg>
<svg style="left:1285.6px;top:7px" width="16" height="15.4" viewBox="0 0 16 15.4"><path d="M4.8 0 L9.4 2.2 L4.8 4.4 L0.2 2.2 Z M0 3 L4.3 5.1 V10.4 L0 8.2 Z M9.6 3 V8.2 L5.3 10.4 V5.1 Z" fill="#6e6e6e"/><path d="M10 6 H12.4 V11 H15.4 L11.2 15.2 L7 11 H10 Z" fill="#389fd6" stroke="#f2f2f2" stroke-width="0.5"/></svg>
<svg style="left:1318px;top:6px" width="16" height="16" viewBox="0 0 16 16"><circle cx="6.7" cy="6.7" r="4.7" fill="none" stroke="#6e6e6e" stroke-width="1.9"/><path d="M10.2 10.2 L14.6 14.6" stroke="#6e6e6e" stroke-width="2.2"/></svg>
<svg style="left:1344px;top:6px" width="16" height="16" viewBox="0 0 16 16"><rect width="16" height="16" fill="#c9c9c9"/><circle cx="8" cy="5.6" r="3.2" fill="#fff"/><rect x="3" y="10.4" width="10" height="5.6" fill="#fff"/></svg>
<svg style="left:31.7px;top:38.2px" width="12.4" height="8" viewBox="0 0 12.4 8"><path d="M0 8 A6.2 6.2 0 0 1 12.4 8 Z" fill="#4bde8d" transform="translate(0,0)"/><path d="M2.6 0.4 L4.2 3 M9.8 0.4 L8.2 3" stroke="#4bde8d" stroke-width="0.9" stroke-linecap="round" fill="none"/><circle cx="3.7" cy="5.6" r="0.75" fill="#fff"/><circle cx="8.7" cy="5.6" r="0.75" fill="#fff"/></svg>
<svg style="left:185.9px;top:34.9px" width="14.2" height="14.2" viewBox="0 0 14.2 14.2"><circle cx="7.1" cy="7.1" r="6.3" fill="none" stroke="#6e6e6e" stroke-width="1.6"/><path d="M7.1 0.6 V4.8 M7.1 9.4 V13.6 M0.6 7.1 H4.8 M9.4 7.1 H13.6" stroke="#6e6e6e" stroke-width="2"/></svg>
<svg style="left:212.8px;top:36px" width="12.2" height="12" viewBox="0 0 12.2 12"><path d="M0 5.9 H12.2" stroke="#6e6e6e" stroke-width="2"/><path d="M3 0.2 H9.4 L6.2 2.9 Z M3 11.8 H9.4 L6.2 9.1 Z" fill="#6e6e6e"/></svg>
<svg style="left:245.5px;top:35.4px" width="13.3" height="13.3" viewBox="0 0 13.3 13.3"><g transform="translate(6.65,6.65)" fill="#6e6e6e"><rect x="-1.7" y="-6.65" width="3.4" height="13.3" rx="0.4" transform="rotate(0)"/><rect x="-1.7" y="-6.65" width="3.4" height="13.3" rx="0.4" transform="rotate(60)"/><rect x="-1.7" y="-6.65" width="3.4" height="13.3" rx="0.4" transform="rotate(120)"/><circle r="4.921"/></g><circle cx="6.65" cy="6.65" r="2.1" fill="#f2f2f2"/></svg>
<div style="left:272px;top:40.9px;width:12px;height:2px;background:#6e6e6e;"></div>
<svg style="left:6px;top:91px" width="11" height="9" viewBox="0 0 11 9"><path d="M0 0 H4.6 L5.8 1.8 H11 V9 H0 Z" fill="#6e6e6e"/></svg>
<svg style="left:5.7px;top:226.5px" width="11.6" height="10.6" viewBox="0 0 11.6 10.6"><path d="M5.6 0 L8.8 4.6 H2.4 Z" fill="#6e6e6e"/><rect x="0" y="5.8" width="5" height="4.8" fill="#6e6e6e"/><circle cx="8.9" cy="8.2" r="2.6" fill="#6e6e6e"/></svg>
<svg style="left:6.6px;top:425.6px" width="9.8" height="9.8" viewBox="0 0 9.8 9.8"><rect x="5.4" y="0" width="4.4" height="4.4" fill="#6e6e6e"/><rect x="0" y="5.4" width="4.4" height="4.4" fill="#6e6e6e"/><rect x="5.4" y="5.4" width="4.4" height="4.4" fill="#6e6e6e"/></svg>
<svg style="left:5.6px;top:520px" width="12.4" height="12" viewBox="0 0 12.4 12"><path d="M6.2 0 L7.7 4.4 L12.4 4.5 L8.7 7.4 L10 11.9 L6.2 9.2 L2.4 11.9 L3.7 7.4 L0 4.5 L4.7 4.4 Z" fill="#6e6e6e"/></svg>
<svg style="left:5.9px;top:633px" width="11.4" height="8" viewBox="0 0 11.4 8"><path d="M0 8 L1.6 3.4 L0.4 0.6 L1.2 0.2 L2.6 2.6 C4.6 1.6 6.8 1.6 8.8 2.6 L10.2 0.2 L11 0.6 L9.8 3.4 L11.4 8 Z" fill="#6e6e6e"/></svg>
<svg style="left:1349.8px;top:39.6px" width="13.6" height="10.6" viewBox="0 0 16 12"><path fill="#6e6e6e" d="M0.6 11.8 C0.2 8 0.8 4.8 3.2 3.5 C5.4 2.4 8.2 2.5 10.4 3.5 C11.7 4.1 12.5 5.2 12.8 6.4 L11.7 8.4 C11.2 9.6 10.9 10.6 10.9 11.8 L9.3 11.8 L8.9 10.5 L6.9 10.5 L6.5 11.8 L4.5 11.8 L4.1 10.5 L2.5 10.5 L2.1 11.8 Z"/><path fill="none" stroke="#6e6e6e" stroke-width="1.5" stroke-linecap="round" d="M11.6 7.2 C14 6.2 15.5 4.4 15.1 2.7 C14.8 1.3 13.4 0.6 12.3 1.1 L11.6 1.6"/><path fill="none" stroke="#d8d8d8" stroke-width="0.6" d="M3.6 6.2 C4.6 7 5.6 6.6 6.4 5.6"/></svg>
<svg style="left:1352px;top:441.1px" width="10.5" height="13" viewBox="0 0 10.5 13"><rect x="0" y="0" width="6.9" height="10.8" rx="0.9" fill="#6e6e6e"/><rect x="1" y="1.8" width="4.9" height="7.5" fill="#f4f4f4"/><rect x="3" y="5.7" width="7.5" height="7.3" fill="#f2f2f2"/><rect x="4.55" y="7.45" width="4.9" height="2.8" fill="#f7f7f7" stroke="#6e6e6e" stroke-width="1.1"/><path d="M4 12.3 H10" stroke="#6e6e6e" stroke-width="1"/></svg>
<svg style="left:1352px;top:527.1px" width="8.8" height="12.7" viewBox="0 0 8.8 12.7"><rect x="0" y="0" width="8.8" height="12.7" rx="0.9" fill="#6e6e6e"/><rect x="1" y="1.9" width="6.8" height="7.9" fill="#f4f4f4"/><rect x="2.9" y="10.8" width="3.1" height="1.1" fill="#f2f2f2"/></svg>
<svg style="left:1246.8px;top:90.4px" width="12.4" height="10.8" viewBox="0 0 12.4 10.8"><path d="M6.2 0 L12.4 10.8 H0 Z" fill="#eec111"/><path d="M6.2 3.6 V7.2 M6.2 8.2 V9.6" stroke="#fff" stroke-width="1.5"/></svg>
<svg style="left:1276px;top:91px" width="12" height="12" viewBox="0 0 12 12"><path d="M0.8 4.4 L4 7.4 L10.4 0.6" fill="none" stroke="#4c9b58" stroke-width="2.3"/><path d="M0 10.4 L1.7 9 L3.4 10.4 L5.1 9 L6.8 10.4 L8.5 9 L10.2 10.4" fill="none" stroke="#59a869" stroke-width="0.9"/></svg>
<svg style="left:1308px;top:93px" width="9" height="6" viewBox="0 0 9 6"><path d="M0.6 5.2 L4.5 1.2 L8.4 5.2" fill="none" stroke="#6e6e6e" stroke-width="1.2"/></svg>
<svg style="left:1329px;top:93px" width="9" height="6" viewBox="0 0 9 6"><path d="M0.6 0.8 L4.5 4.8 L8.4 0.8" fill="none" stroke="#6e6e6e" stroke-width="1.2"/></svg>
<svg style="left:301px;top:34px" width="16" height="16" viewBox="0 0 16 16"><path d="M7.2 1 H12 V7.9 H2 V5.7 H7.2 Z" fill="#aab5bd"/><path d="M5.8 1.2 V4.7 H2.3 Z" fill="#b4bec5"/><rect x="0" y="9.1" width="15" height="6.5" fill="#f2946a"/><path d="M4.6 10 L2.3 12.3 L4.6 14.6 M7.4 10 L9.7 12.3 L7.4 14.6" fill="none" stroke="#4a3a30" stroke-width="1"/></svg>
<svg style="left:286px;top:7px" width="16" height="16" viewBox="0 0 16 16"><path d="M7.2 1 H12 V7.9 H2 V5.7 H7.2 Z" fill="#aab5bd"/><path d="M5.8 1.2 V4.7 H2.3 Z" fill="#b4bec5"/><rect x="0" y="9.1" width="15" height="6.5" fill="#f2946a"/><path d="M4.6 10 L2.3 12.3 L4.6 14.6 M7.4 10 L9.7 12.3 L7.4 14.6" fill="none" stroke="#4a3a30" stroke-width="1"/></svg>
</div></body></html>
